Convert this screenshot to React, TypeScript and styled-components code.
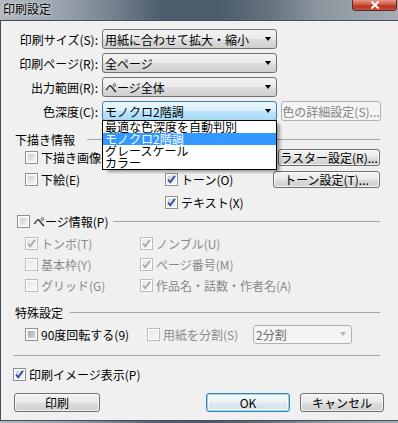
import React from "react";
import styled, { createGlobalStyle, css } from "styled-components";

const GlobalStyle = createGlobalStyle`
  html, body { margin: 0; padding: 0; background: #6f7d8b; }
  body {
    font-family: "Noto Sans CJK JP", "Noto Sans", sans-serif;
    font-size: 12px;
    color: #000;
  }
  * { box-sizing: border-box; }
`;

const Frame = styled.div`
  width: 398px;
  height: 423px;
  display: flex;
  flex-direction: column;
  overflow: hidden;
  background: linear-gradient(90deg, #b2b8be 0%, #9aa4ae 15%, #76838f 28%, #4f5e6e 40%, #4d5c6b 55%, #66737f 68%, #8c969f 80%, #a6adb4 100%);
`;

const TitleBar = styled.div`
  height: 20px;
  display: flex;
  align-items: flex-start;
  padding-left: 3px;
  flex: none;
`;

const Title = styled.span`
  font-size: 12px;
  line-height: 14px;
  margin-top: 2px;
  color: #000;
  text-shadow: 0 0 5px rgba(255, 255, 255, 0.7), 0 0 2px rgba(255, 255, 255, 0.6);
`;

const CloseButton = styled.div`
  margin-left: auto;
  margin-right: 1px;
  width: 45px;
  height: 11px;
  border: 1px solid #5a2a24;
  border-top: none;
  border-radius: 0 0 4px 4px;
  background: linear-gradient(180deg, #e09a8a 0%, #cf5a44 45%, #b8311c 60%, #c9533a 100%);
  display: flex;
  align-items: center;
  justify-content: center;
`;

const Client = styled.div`
  flex: 1;
  margin-bottom: 2px;
  border: 1px solid #434f5b;
  border-right: none;
  background: #f0f0f0;
  padding-top: 8px;
  display: flex;
  flex-direction: column;
`;

const FormGrid = styled.div`
  display: grid;
  grid-template-columns: 96px 175px 100px;
  grid-auto-rows: 20px;
  column-gap: 4px;
  row-gap: 4px;
  align-items: center;
  padding-left: 1px;
`;

const FieldLabel = styled.span`
  text-align: right;
  line-height: 13px;
  white-space: nowrap;
`;

const ComboWrap = styled.div`
  position: relative;
  height: 20px;
`;

const Combo = styled.div<{ $focus?: boolean; $disabled?: boolean; $h?: number }>`
  height: ${(p) => p.$h ?? 20}px;
  border: 1px solid #707070;
  border-radius: 3px;
  display: flex;
  align-items: center;
  padding-left: 2px;
  line-height: 13px;
  white-space: nowrap;
  background: linear-gradient(180deg, #f2f2f2 0%, #ebebeb 48%, #dddddd 52%, #cfcfcf 100%);
  ${(p) =>
    p.$focus &&
    css`
      border-color: #3c7fb1;
      background: linear-gradient(180deg, #eaf6fd 0%, #d9f0fc 48%, #bee6fd 52%, #a7d9f5 100%);
    `}
  ${(p) =>
    p.$disabled &&
    css`
      border-color: #adb2b5;
      background: #f4f4f4;
      color: #6d6d6d;
    `}
`;

const ComboText = styled.span`
  flex: 1;
`;

const Arrow = styled.span<{ $disabled?: boolean }>`
  width: 0;
  height: 0;
  border-left: 3.5px solid transparent;
  border-right: 3.5px solid transparent;
  border-top: 4px solid ${(p) => (p.$disabled ? "#b4b4b4" : "#000")};
  margin-right: 5px;
`;

const DropList = styled.div`
  position: absolute;
  left: 0;
  top: 19px;
  width: 175px;
  border: 1px solid #000;
  background: #fff;
  z-index: 10;
  box-shadow: 4px 3px 3px -1px rgba(0, 0, 0, 0.35);
`;

const DropItem = styled.div<{ $selected?: boolean }>`
  height: 12px;
  line-height: 12px;
  padding-left: 2px;
  white-space: nowrap;
  background: ${(p) => (p.$selected ? "#3399ff" : "#fff")};
  color: ${(p) => (p.$selected ? "#fff" : "#000")};
`;

const Button = styled.div<{ $w: number; $h?: number; $default?: boolean; $disabled?: boolean }>`
  width: ${(p) => p.$w}px;
  height: ${(p) => p.$h ?? 19}px;
  border: 1px solid #707070;
  border-radius: 3px;
  display: flex;
  align-items: center;
  justify-content: center;
  line-height: 13px;
  white-space: nowrap;
  background: linear-gradient(180deg, #f2f2f2 0%, #ebebeb 48%, #dddddd 52%, #cfcfcf 100%);
  box-shadow: inset 0 0 0 1px rgba(255, 255, 255, 0.7);
  ${(p) =>
    p.$default &&
    css`
      border-color: #3c7fb1;
      box-shadow: inset 0 0 0 1px #9fd5f3, inset 0 0 0 2px rgba(255, 255, 255, 0.6);
      background: linear-gradient(180deg, #f4f9fc 0%, #eaf3f8 48%, #dde9f0 52%, #d0e0ea 100%);
    `}
  ${(p) =>
    p.$disabled &&
    css`
      border-color: #adb2b5;
      background: #f4f4f4;
      color: #838383;
      box-shadow: none;
    `}
`;

const GroupHeader = styled.div<{ $mt: number; $ml: number; $gap: number }>`
  display: flex;
  align-items: center;
  height: 13px;
  margin: ${(p) => p.$mt}px 18px 0 ${(p) => p.$ml}px;
  line-height: 13px;
  white-space: nowrap;
  &::after {
    content: "";
    flex: 1;
    height: 1px;
    background: #a5a5a5;
    margin-left: ${(p) => p.$gap}px;
  }
`;

const DraftGrid = styled.div`
  display: grid;
  grid-template-columns: 140px 1fr auto;
  grid-template-rows: 22px 23px 23px;
  align-items: center;
  padding-left: 24px;
  margin-right: 18px;
`;

const PageGrid = styled.div`
  display: grid;
  grid-template-columns: 115px 1fr;
  grid-auto-rows: 21px;
  align-items: center;
  padding-left: 24px;
  margin-top: 5px;
`;

const SpecialRow = styled.div`
  display: grid;
  grid-template-columns: 122px 106px 99px;
  align-items: center;
  height: 20px;
  padding-left: 24px;
  margin-top: 5px;
`;

const Separator = styled.div`
  height: 1px;
  background: #a5a5a5;
  margin: 11px 18px 0 12px;
`;

const PreviewRow = styled.div`
  display: flex;
  align-items: center;
  height: 13px;
  padding-left: 12px;
  margin-top: 12px;
`;

const ButtonRow = styled.div`
  display: grid;
  grid-template-columns: 86px 1fr 84px 84px;
  column-gap: 10px;
  padding-left: 13px;
  margin-right: 14px;
  margin-top: 12px;
`;

const CheckLabel = styled.span<{ $disabled?: boolean }>`
  display: inline-flex;
  align-items: center;
  gap: 3px;
  line-height: 13px;
  white-space: nowrap;
  color: ${(p) => (p.$disabled ? "#8a8a8a" : "#000")};
`;

const Box = styled.span<{ $disabled?: boolean; $shade?: boolean }>`
  width: 13px;
  height: 13px;
  flex: none;
  position: relative;
  border: 1px solid ${(p) => (p.$disabled ? "#bcbcbc" : "#8e8f8f")};
  background: #fff;
  display: flex;
  align-items: center;
  justify-content: center;
  &::before {
    content: "";
    position: absolute;
    inset: 1px;
    background: ${(p) =>
      p.$disabled
        ? "linear-gradient(135deg, #e6e6e6, #f8f8f8)"
        : p.$shade
        ? "linear-gradient(135deg, #a9a9a9, #d6d6d6)"
        : "linear-gradient(135deg, #cfcfcf, #f4f4f4)"};
    border: 1px solid ${(p) => (p.$disabled ? "#f0f0f0" : "#f2f2f2")};
  }
  svg {
    position: relative;
  }
`;

type CheckProps = {
  label: string;
  checked?: boolean;
  disabled?: boolean;
  shade?: boolean;
};

const Check = ({ label, checked, disabled, shade }: CheckProps) => (
  <CheckLabel $disabled={disabled}>
    <Box $disabled={disabled} $shade={shade}>
      {checked && (
        <svg width="11" height="11" viewBox="0 0 11 11">
          <path
            d="M2 5.5 L4.3 8.3 L9 1.8"
            fill="none"
            stroke={disabled ? "#a9a9a9" : "#2b4f9e"}
            strokeWidth="1.9"
          />
        </svg>
      )}
    </Box>
    {label}
  </CheckLabel>
);

const RightButton = styled.div`
  justify-self: end;
`;

export default function App() {
  return (
    <>
      <GlobalStyle />
      <Frame>
        <TitleBar>
          <Title>印刷設定</Title>
          <CloseButton>
            <svg width="10" height="8" viewBox="0 0 10 8">
              <path d="M1.5 0.5 L8.5 7.5 M8.5 0.5 L1.5 7.5" stroke="#fff" strokeWidth="2" />
            </svg>
          </CloseButton>
        </TitleBar>
        <Client>
          <FormGrid>
            <FieldLabel>印刷サイズ(S):</FieldLabel>
            <Combo>
              <ComboText>用紙に合わせて拡大・縮小</ComboText>
              <Arrow />
            </Combo>
            <span />
            <FieldLabel>印刷ページ(R):</FieldLabel>
            <Combo>
              <ComboText>全ページ</ComboText>
              <Arrow />
            </Combo>
            <span />
            <FieldLabel>出力範囲(R):</FieldLabel>
            <Combo>
              <ComboText>ページ全体</ComboText>
              <Arrow />
            </Combo>
            <span />
            <FieldLabel>色深度(C):</FieldLabel>
            <ComboWrap>
              <Combo $focus>
                <ComboText>モノクロ2階調</ComboText>
                <Arrow />
              </Combo>
              <DropList>
                <DropItem>最適な色深度を自動判別</DropItem>
                <DropItem $selected>モノクロ2階調</DropItem>
                <DropItem>グレースケール</DropItem>
                <DropItem>カラー</DropItem>
              </DropList>
            </ComboWrap>
            <Button $w={100} $h={20} $disabled>
              色の詳細設定(S)...
            </Button>
          </FormGrid>

          <GroupHeader $mt={12} $ml={14} $gap={12}>
            下描き情報
          </GroupHeader>
          <DraftGrid>
            <Check label="下描き画像(" />
            <span />
            <RightButton>
              <Button $w={102} $h={17}>ラスター設定(R)...</Button>
            </RightButton>
            <Check label="下絵(E)" />
            <Check label="トーン(O)" checked />
            <RightButton>
              <Button $w={107} $h={17}>トーン設定(T)...</Button>
            </RightButton>
            <span />
            <Check label="テキスト(X)" checked />
            <span />
          </DraftGrid>

          <GroupHeader $mt={1} $ml={16} $gap={5}>
            <Check label="ページ情報(P)" />
          </GroupHeader>
          <PageGrid>
            <Check label="トンボ(T)" checked disabled />
            <Check label="ノンブル(U)" checked disabled />
            <Check label="基本枠(Y)" disabled />
            <Check label="ページ番号(M)" checked disabled />
            <Check label="グリッド(G)" disabled />
            <Check label="作品名・話数・作者名(A)" checked disabled />
          </PageGrid>

          <GroupHeader $mt={10} $ml={14} $gap={7}>
            特殊設定
          </GroupHeader>
          <SpecialRow>
            <Check label="90度回転する(9)" shade />
            <Check label="用紙を分割(S)" disabled />
            <Combo $disabled $h={19}>
              <ComboText>2分割</ComboText>
              <Arrow $disabled />
            </Combo>
          </SpecialRow>

          <Separator />

          <PreviewRow>
            <Check label="印刷イメージ表示(P)" checked />
          </PreviewRow>

          <ButtonRow>
            <Button $w={86}>印刷</Button>
            <span />
            <Button $w={84} $default>
              OK
            </Button>
            <Button $w={84}>キャンセル</Button>
          </ButtonRow>
        </Client>
      </Frame>
    </>
  );
}
